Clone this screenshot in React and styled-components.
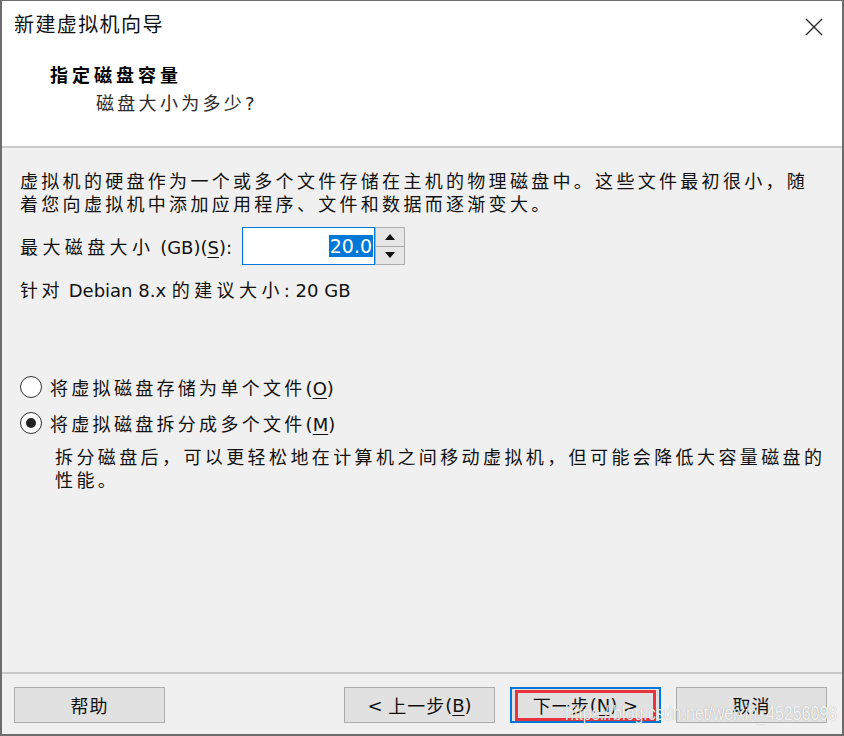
import React from "react";
import styled, { createGlobalStyle } from "styled-components";

const GlobalStyle = createGlobalStyle`
  html, body {
    margin: 0;
    padding: 0;
    background: #f0f0f0;
  }
  body {
    font-family: "DejaVu Sans", "Noto Sans CJK SC", sans-serif;
    font-size: 18px;
    color: #111;
  }
`;

function App() {
  return (
    <Window>
      <GlobalStyle />
      <Header>
        <TitleRow>
          <Title>新建虚拟机向导</Title>
          <Close aria-label="close">
            <svg width="20" height="20" viewBox="0 0 20 20">
              <path d="M2 2 L18 18 M18 2 L2 18" stroke="#2b2b2b" strokeWidth="1.4" fill="none" />
            </svg>
          </Close>
        </TitleRow>
        <Heading>指定磁盘容量</Heading>
        <SubHeading>
          磁盘大小为多少<Lat>?</Lat>
        </SubHeading>
      </Header>

      <Body>
        <Text $spacing={3.3}>
          虚拟机的硬盘作为一个或多个文件存储在主机的物理磁盘中。这些文件最初很小，随
          <br />
          着您向虚拟机中添加应用程序、文件和数据而逐渐变大。
        </Text>

        <SpinRow>
          <Label>
            <Cjk $spacing={4.4}>最大磁盘大小</Cjk>
            <Lat>{" (GB)("}<U>S</U>):</Lat>
          </Label>
          <Spin>
            <SpinInput>
              <Selected>20.0</Selected>
            </SpinInput>
            <SpinButtons>
              <SpinButton>
                <svg width="10" height="6" viewBox="0 0 10 6">
                  <path d="M0 6 L5 0 L10 6 Z" fill="#111" />
                </svg>
              </SpinButton>
              <SpinButton>
                <svg width="10" height="6" viewBox="0 0 10 6">
                  <path d="M0 0 L10 0 L5 6 Z" fill="#111" />
                </svg>
              </SpinButton>
            </SpinButtons>
          </Spin>
        </SpinRow>

        <Hint>
          <Cjk $spacing={3.5}>针对</Cjk>
          <Lat>{" Debian 8.x "}</Lat>
          <Cjk $spacing={4.4}>的建议大小</Cjk>
          <Lat>: 20 GB</Lat>
        </Hint>

        <RadioList>
          <RadioRow>
            <Radio $checked={false} />
            <RadioLabel>
              <Cjk $spacing={3.3}>将虚拟磁盘存储为单个文件</Cjk>
              <Lat>
                (<U>O</U>)
              </Lat>
            </RadioLabel>
          </RadioRow>
          <RadioRow>
            <Radio $checked />
            <RadioLabel>
              <Cjk $spacing={3.3}>将虚拟磁盘拆分成多个文件</Cjk>
              <Lat>
                (<U>M</U>)
              </Lat>
            </RadioLabel>
          </RadioRow>
          <Description $spacing={3.4}>
            拆分磁盘后，可以更轻松地在计算机之间移动虚拟机，但可能会降低大容量磁盘的
            <br />
            性能。
          </Description>
        </RadioList>
      </Body>

      <Footer>
        <Button>帮助</Button>
        <Spacer />
        <Button>
          <Lat>{"< "}</Lat>
          上一步
          <Lat>
            (<U>B</U>)
          </Lat>
        </Button>
        <Button $primary>
          下一步
          <Lat>
            (<U>N</U>){" >"}
          </Lat>
          <Marker />
        </Button>
        <Button>取消</Button>
        <Watermark>https://blog.csdn.net/weixin_45256098</Watermark>
      </Footer>
    </Window>
  );
}

export default App;

const Window = styled.div`
  position: relative;
  box-sizing: border-box;
  width: 844px;
  height: 736px;
  display: flex;
  flex-direction: column;
  border: 2px solid #6d6d6d;
  border-top-width: 1px;
  background: #f0f0f0;
  overflow: hidden;
`;

const Header = styled.div`
  height: 147px;
  flex-shrink: 0;
  box-sizing: border-box;
  background: #fff;
  border-bottom: 2px solid #c9c9c9;
  padding: 9px 18px 0 12px;
`;

const TitleRow = styled.div`
  display: flex;
  justify-content: space-between;
  align-items: center;
  height: 28px;
`;

const Title = styled.div`
  font-family: "Noto Sans CJK SC", sans-serif;
  font-size: 20px;
  line-height: 28px;
  letter-spacing: 1.4px;
  color: #111;
`;

const Close = styled.div`
  width: 20px;
  height: 20px;
  margin-top: 6px;
  display: flex;
`;

const Heading = styled.div`
  margin: 24px 0 0 36px;
  font-family: "Noto Sans CJK SC", sans-serif;
  font-weight: 700;
  font-size: 18px;
  line-height: 24px;
  letter-spacing: 4px;
  color: #000;
`;

const SubHeading = styled.div`
  margin: 6px 0 0 82px;
  font-size: 18px;
  line-height: 24px;
  letter-spacing: 3.3px;
  color: #2a2a2a;
`;

const Lat = styled.span`
  font-family: "DejaVu Sans", sans-serif;
  letter-spacing: 0;
  white-space: pre;
`;

const Cjk = styled.span`
  letter-spacing: ${(p) => p.$spacing || 0}px;
`;

const U = styled.span`
  text-decoration: underline;
  text-underline-offset: 3px;
  text-decoration-thickness: 1px;
`;

const Body = styled.div`
  flex: 1;
  display: flex;
  flex-direction: column;
  padding: 22px 16px 0 18px;
`;

const Text = styled.p`
  margin: 0;
  line-height: 23px;
  white-space: nowrap;
  letter-spacing: ${(p) => p.$spacing}px;
`;

const SpinRow = styled.div`
  display: flex;
  align-items: center;
  gap: 10px;
  margin-top: 11px;
`;

const Label = styled.span`
  white-space: nowrap;
`;

const Spin = styled.div`
  display: flex;
  height: 38px;
`;

const SpinInput = styled.div`
  box-sizing: border-box;
  width: 133px;
  height: 38px;
  background: #fff;
  border: 1px solid #0078d7;
  display: flex;
  align-items: center;
  justify-content: flex-end;
  padding-right: 1px;
`;

const Selected = styled.span`
  background: #0078d7;
  color: #fff;
  font-size: 19px;
  line-height: 22px;
  padding: 0 1px;
`;

const SpinButtons = styled.div`
  display: flex;
  flex-direction: column;
  width: 30px;
  height: 38px;
`;

const SpinButton = styled.div`
  flex: 1;
  box-sizing: border-box;
  display: flex;
  align-items: center;
  justify-content: center;
  background: #e6e6e6;
  border: 1px solid #adadad;
  & + & {
    border-top: none;
  }
`;

const Hint = styled.div`
  margin-top: 14px;
  line-height: 23px;
  white-space: nowrap;
`;

const RadioList = styled.div`
  display: flex;
  flex-direction: column;
  margin-top: 70px;
`;

const RadioRow = styled.div`
  display: flex;
  align-items: center;
  height: 30px;
  gap: 8px;
  margin-bottom: 6px;
  white-space: nowrap;
`;

const RadioLabel = styled.span`
  white-space: nowrap;
`;

const Radio = styled.span`
  position: relative;
  box-sizing: border-box;
  width: 22px;
  height: 22px;
  border-radius: 50%;
  border: 1.5px solid #333;
  background: #fff;
  flex-shrink: 0;
  &::after {
    content: "";
    display: ${(p) => (p.$checked ? "block" : "none")};
    position: absolute;
    left: 50%;
    top: 50%;
    width: 10px;
    height: 10px;
    margin: -5px 0 0 -5px;
    border-radius: 50%;
    background: #222;
  }
`;

const Description = styled(Text)`
  margin: 2px 0 0 35px;
`;

const Footer = styled.div`
  position: relative;
  height: 62px;
  flex-shrink: 0;
  box-sizing: border-box;
  border-top: 2px solid #c9c9c9;
  display: flex;
  align-items: flex-start;
  gap: 15px;
  padding: 13px 15px 0 12px;
`;

const Spacer = styled.div`
  flex: 1;
`;

const Button = styled.div`
  position: relative;
  box-sizing: border-box;
  width: 151px;
  height: 36px;
  display: flex;
  align-items: center;
  justify-content: center;
  background: #e1e1e1;
  border: ${(p) => (p.$primary ? "2px solid #0078d7" : "1.5px solid #adadad")};
  font-size: 18px;
  letter-spacing: 1px;
  color: #111;
  white-space: nowrap;
`;

const Marker = styled.span`
  position: absolute;
  inset: 1px 3px 0 3px;
  border: 3px solid #e8353d;
`;

const Watermark = styled.div`
  position: absolute;
  left: 563px;
  top: 27px;
  font-family: "Liberation Sans", sans-serif;
  font-size: 20px;
  line-height: 24px;
  color: rgba(255, 255, 255, 0.9);
  text-shadow: 0 0 1px rgba(0, 0, 0, 0.35);
  transform: scaleX(0.8);
  transform-origin: left center;
  white-space: nowrap;
  pointer-events: none;
`;
